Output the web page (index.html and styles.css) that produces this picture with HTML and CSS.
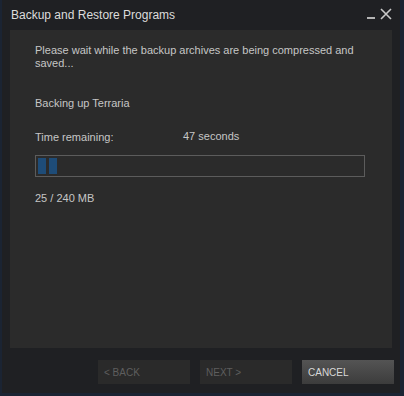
FILE: index.html
```html
<!DOCTYPE html>
<html lang="en">
<head>
  <meta charset="UTF-8">
  <title>Backup and Restore Programs</title>
  <link rel="stylesheet" href="styles.css">
</head>
<body>
  <div class="window">
    <header class="titlebar">
      <span class="title">Backup and Restore Programs</span>
      <span class="controls">
        <span class="minimize"></span>
        <svg class="close" width="12" height="12" viewBox="0 0 12 12">
          <path d="M1 1 L11 11 M11 1 L1 11" stroke="#c8c8c8" stroke-width="1.6" fill="none"/>
        </svg>
      </span>
    </header>

    <main class="panel">
      <p class="intro">Please wait while the backup archives are being compressed and saved...</p>
      <p class="status">Backing up Terraria</p>
      <div class="time">
        <span class="label">Time remaining:</span>
        <span class="value">47 seconds</span>
      </div>
      <div class="progress">
        <span class="seg"></span>
        <span class="seg"></span>
      </div>
      <p class="size">25 / 240 MB</p>
    </main>

    <footer class="buttons">
      <button class="btn" disabled>&lt; BACK</button>
      <button class="btn" disabled>NEXT &gt;</button>
      <button class="btn primary">CANCEL</button>
    </footer>
  </div>
</body>
</html>
```

FILE: styles.css
```css
body {
  margin: 0;
  background-color: #1b2433;
  font-family: Arial, "Liberation Sans", sans-serif;
}

.window {
  width: 398px;
  height: 393px;
  margin-left: 2px;
  background-color: #1f2023;
  display: flex;
  flex-direction: column;
}

.titlebar {
  height: 30px;
  display: flex;
  align-items: center;
  justify-content: space-between;
  padding: 0 8px 0 9px;
}

.title {
  color: #dcdcdc;
  font-size: 12px;
  margin-top: -1px;
}

.controls {
  display: flex;
  align-items: flex-end;
  gap: 5px;
  margin-top: -2px;
}

.minimize {
  width: 8px;
  height: 2px;
  background-color: #b4b4b4;
  margin-bottom: 1px;
}

.panel {
  margin: 0 8px;
  height: 318px;
  background-color: #2b2b2b;
  padding: 14px 25px 0;
  box-sizing: border-box;
  color: #c6c6c6;
  font-size: 11px;
}

.panel p {
  margin: 0;
}

.intro {
  line-height: 13px;
}

.status {
  padding-top: 27px;
}

.time {
  display: flex;
  padding-top: 22px;
}

.label {
  width: 148px;
}

.value {
  margin-top: -1px;
}

.progress {
  margin-top: 12px;
  height: 22px;
  width: 330px;
  border: 1px solid #5c5c5c;
  box-sizing: border-box;
  display: flex;
  gap: 3px;
  padding: 2px;
}

.seg {
  width: 8px;
  background-color: #1e4c78;
}

.size {
  padding-top: 15px;
}

.buttons {
  display: flex;
  justify-content: flex-end;
  gap: 10px;
  padding: 12px 6px 0 0;
}

.btn {
  width: 92px;
  height: 24px;
  border: none;
  background-color: #2a2a2a;
  color: #5e5e5e;
  font-family: Arial, "Liberation Sans", sans-serif;
  font-size: 10px;
  text-align: left;
  padding: 0 6px;
}

.btn.primary {
  background: linear-gradient(#545454, #3c3c3c);
  color: #d8d8d8;
}
```
